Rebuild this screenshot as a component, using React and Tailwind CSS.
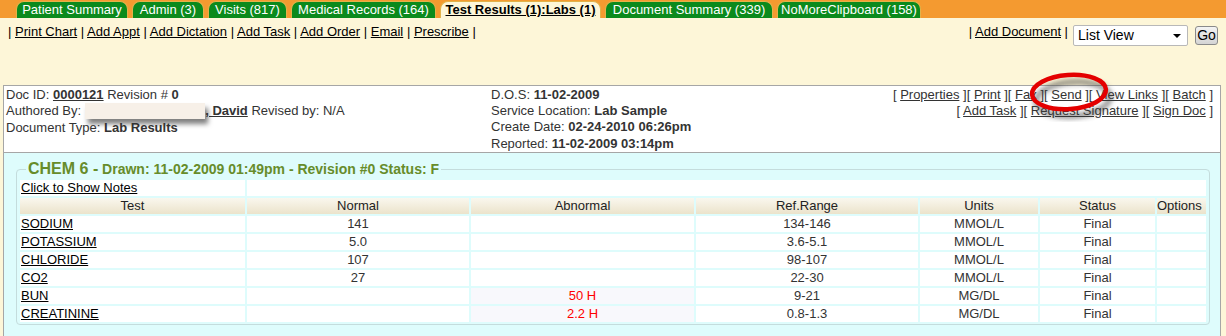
import React from "react";

const tabs = [
  { label: "Patient Summary", w: "w-[112px]" },
  { label: "Admin (3)", w: "w-[72px]" },
  { label: "Visits (817)", w: "w-[79px]" },
  { label: "Medical Records (164)", w: "w-[145px]" },
  { label: "Test Results (1):Labs (1)", w: "w-[161px]", active: true },
  { label: "Document Summary (339)", w: "w-[168px]" },
  { label: "NoMoreClipboard (158)", w: "w-[144px]" },
];

const topLinks = ["Print Chart", "Add Appt", "Add Dictation", "Add Task", "Add Order", "Email", "Prescribe"];

const rows = [
  ["SODIUM", "141", "", "134-146", "MMOL/L", "Final"],
  ["POTASSIUM", "5.0", "", "3.6-5.1", "MMOL/L", "Final"],
  ["CHLORIDE", "107", "", "98-107", "MMOL/L", "Final"],
  ["CO2", "27", "", "22-30", "MMOL/L", "Final"],
  ["BUN", "", "50 H", "9-21", "MG/DL", "Final"],
  ["CREATININE", "", "2.2 H", "0.8-1.3", "MG/DL", "Final"],
];

function Bracket({ items }) {
  return (
    <div>
      {items.map((t, i) => (
        <span key={t}>
          {i === 0 ? "[ " : "]["}
          {i === 0 ? null : " "}
          <span className="underline">{t}</span>{" "}
        </span>
      ))}
      ]
    </div>
  );
}

export default function App() {
  return (
    <div className="relative w-[1226px] h-[336px] overflow-hidden bg-[#fdf6d8] font-['Liberation_Sans',Arial,sans-serif] text-[13px] text-[#222]">
      {/* Tab bar */}
      <div className="h-[18px] bg-[#f49a30] flex items-end gap-[4px] pl-[16px]">
        {tabs.map((t) => (
          <div
            key={t.label}
            className={
              t.active
                ? `${t.w} h-[17px] rounded-t-[8px] border border-b-0 border-[#e2b24a] bg-[#fdf6d8] text-black font-bold underline text-center leading-[16px]`
                : `${t.w} h-[17px] rounded-t-[8px] border border-b-0 border-[#e2b24a] bg-[#0b8a1c] text-white text-center leading-[16px]`
            }
          >
            {t.label}
          </div>
        ))}
      </div>

      {/* Links row */}
      <div className="h-[67px] flex justify-between items-start pl-[8px] pr-[8px]">
        <div className="mt-[6px] leading-[15px] text-black">
          |{" "}
          {topLinks.map((l) => (
            <span key={l}>
              <span className="underline">{l}</span> |{" "}
            </span>
          ))}
        </div>
        <div className="flex items-start">
          <div className="mt-[6px] leading-[15px] text-black mr-[5px]">
            | <span className="underline">Add Document</span> |
          </div>
          <div className="mt-[7px] w-[115px] h-[21px] bg-white border border-[#b8b8b8] rounded-[2px] flex items-center justify-between pl-[4px] pr-[6px] text-[14px] text-black">
            <span>List View</span>
            <span className="w-0 h-0 border-l-[4px] border-r-[4px] border-t-[4px] border-l-transparent border-r-transparent border-t-black"></span>
          </div>
          <div className="mt-[8px] ml-[7px] w-[23px] h-[19px] rounded-[3px] border border-[#8a8a8a] bg-gradient-to-b from-[#f4f4f4] to-[#d4d4d4] text-[14px] text-black flex items-center justify-center">
            Go
          </div>
        </div>
      </div>

      {/* Document container */}
      <div className="ml-[3px] w-[1218px] h-[260px] border border-b-0 border-[#a6a6a6] bg-[#defcfc]">
        {/* Doc header */}
        <div className="h-[67px] bg-white border-b border-[#a6a6a6] flex pt-[1px] leading-[16px] text-[#333]">
          <div className="w-[487px] pl-[2px]">
            <div>
              Doc ID: <span className="font-bold underline">0000121</span> Revision # <span className="font-bold">0</span>
            </div>
            <div className="flex items-center">
              <span>Authored By:</span>
              <span className="inline-block ml-[4px] w-[120px] h-[16px] bg-[#f7f0e8] shadow-[3px_5px_5px_rgba(0,0,0,0.5)]"></span>
              <span className="font-bold underline">, David</span>
              <span>&nbsp;Revised by: N/A</span>
            </div>
            <div className="mt-[1px]">
              Document Type: <span className="font-bold">Lab Results</span>
            </div>
          </div>
          <div className="w-[380px]">
            <div>
              D.O.S: <span className="font-bold">11-02-2009</span>
            </div>
            <div>
              Service Location: <span className="font-bold">Lab Sample</span>
            </div>
            <div>
              Create Date: <span className="font-bold">02-24-2010 06:26pm</span>
            </div>
            <div className="mt-[1px]">
              Reported: <span className="font-bold">11-02-2009 03:14pm</span>
            </div>
          </div>
          <div className="flex-1 text-right pr-[7px] text-[#333]">
            <Bracket items={["Properties", "Print", "Fax", "Send", "View Links", "Batch"]} />
            <Bracket items={["Add Task", "Request Signature", "Sign Doc"]} />
          </div>
        </div>

        {/* Results area */}
        <div className="pl-[12px] pt-[6px]">
          <fieldset className="w-[1194px] border border-[#c4dcdc] rounded-[4px] pl-[1px] pr-[1px] pb-0">
            <legend className="ml-[8px] px-[2px] leading-[20px] font-bold text-[#678c2a]">
              <span className="text-[16px]">CHEM 6 -</span>
              <span className="text-[14px]"> Drawn: 11-02-2009 01:49pm - Revision #0 Status: F</span>
            </legend>
            <table className="table-fixed border-separate border-spacing-[2px] w-[1190px] -mt-[2px] text-[13px] leading-[16px]">
              <colgroup>
                <col className="w-[225px]" />
                <col className="w-[222px]" />
                <col className="w-[223px]" />
                <col className="w-[222px]" />
                <col className="w-[118px]" />
                <col className="w-[115px]" />
                <col className="w-[49px]" />
              </colgroup>
              <tbody>
                <tr className="h-[16px]">
                  <td className="bg-white p-0 pl-[1px] text-black underline">Click to Show Notes</td>
                  <td className="bg-white p-0" colSpan={6}></td>
                </tr>
                <tr className="h-[16px]">
                  {["Test", "Normal", "Abnormal", "Ref.Range", "Units", "Status"].map((h) => (
                    <td key={h} className="p-0 text-center text-[#222] bg-gradient-to-b from-[#faf7ee] to-[#ebe3cb]">
                      {h}
                    </td>
                  ))}
                  <td className="p-0 text-left text-[#222] bg-gradient-to-b from-[#faf7ee] to-[#ebe3cb]">Options</td>
                </tr>
                {rows.map((r) => (
                  <tr key={r[0]} className="h-[16px]">
                    <td className="bg-white p-0 pl-[1px] text-black underline">{r[0]}</td>
                    <td className="bg-white p-0 text-center text-[#333]">{r[1]}</td>
                    <td className={r[2] ? "bg-[#f8f8fc] p-0 text-center text-[#ff0000]" : "bg-white p-0"}>{r[2]}</td>
                    <td className="bg-white p-0 text-center text-[#333]">{r[3]}</td>
                    <td className="bg-white p-0 text-center text-[#333]">{r[4]}</td>
                    <td className="bg-white p-0 text-center text-[#333]">{r[5]}</td>
                    <td className="bg-white p-0"></td>
                  </tr>
                ))}
              </tbody>
            </table>
          </fieldset>
        </div>
      </div>

      {/* Red circle annotation */}
      <svg className="absolute left-[1022px] top-[66px]" width="100" height="56" viewBox="0 0 100 56">
        <defs>
          <filter id="blur" x="-20%" y="-40%" width="140%" height="180%">
            <feGaussianBlur stdDeviation="2.5" />
          </filter>
        </defs>
        <ellipse cx="51" cy="33" rx="37" ry="17" fill="none" stroke="rgba(60,60,60,0.6)" strokeWidth="5" filter="url(#blur)" transform="rotate(-4 51 33)" />
        <ellipse cx="47" cy="26" rx="37" ry="17" fill="none" stroke="#e40000" strokeWidth="4.5" transform="rotate(-4 47 26)" />
      </svg>
    </div>
  );
}
